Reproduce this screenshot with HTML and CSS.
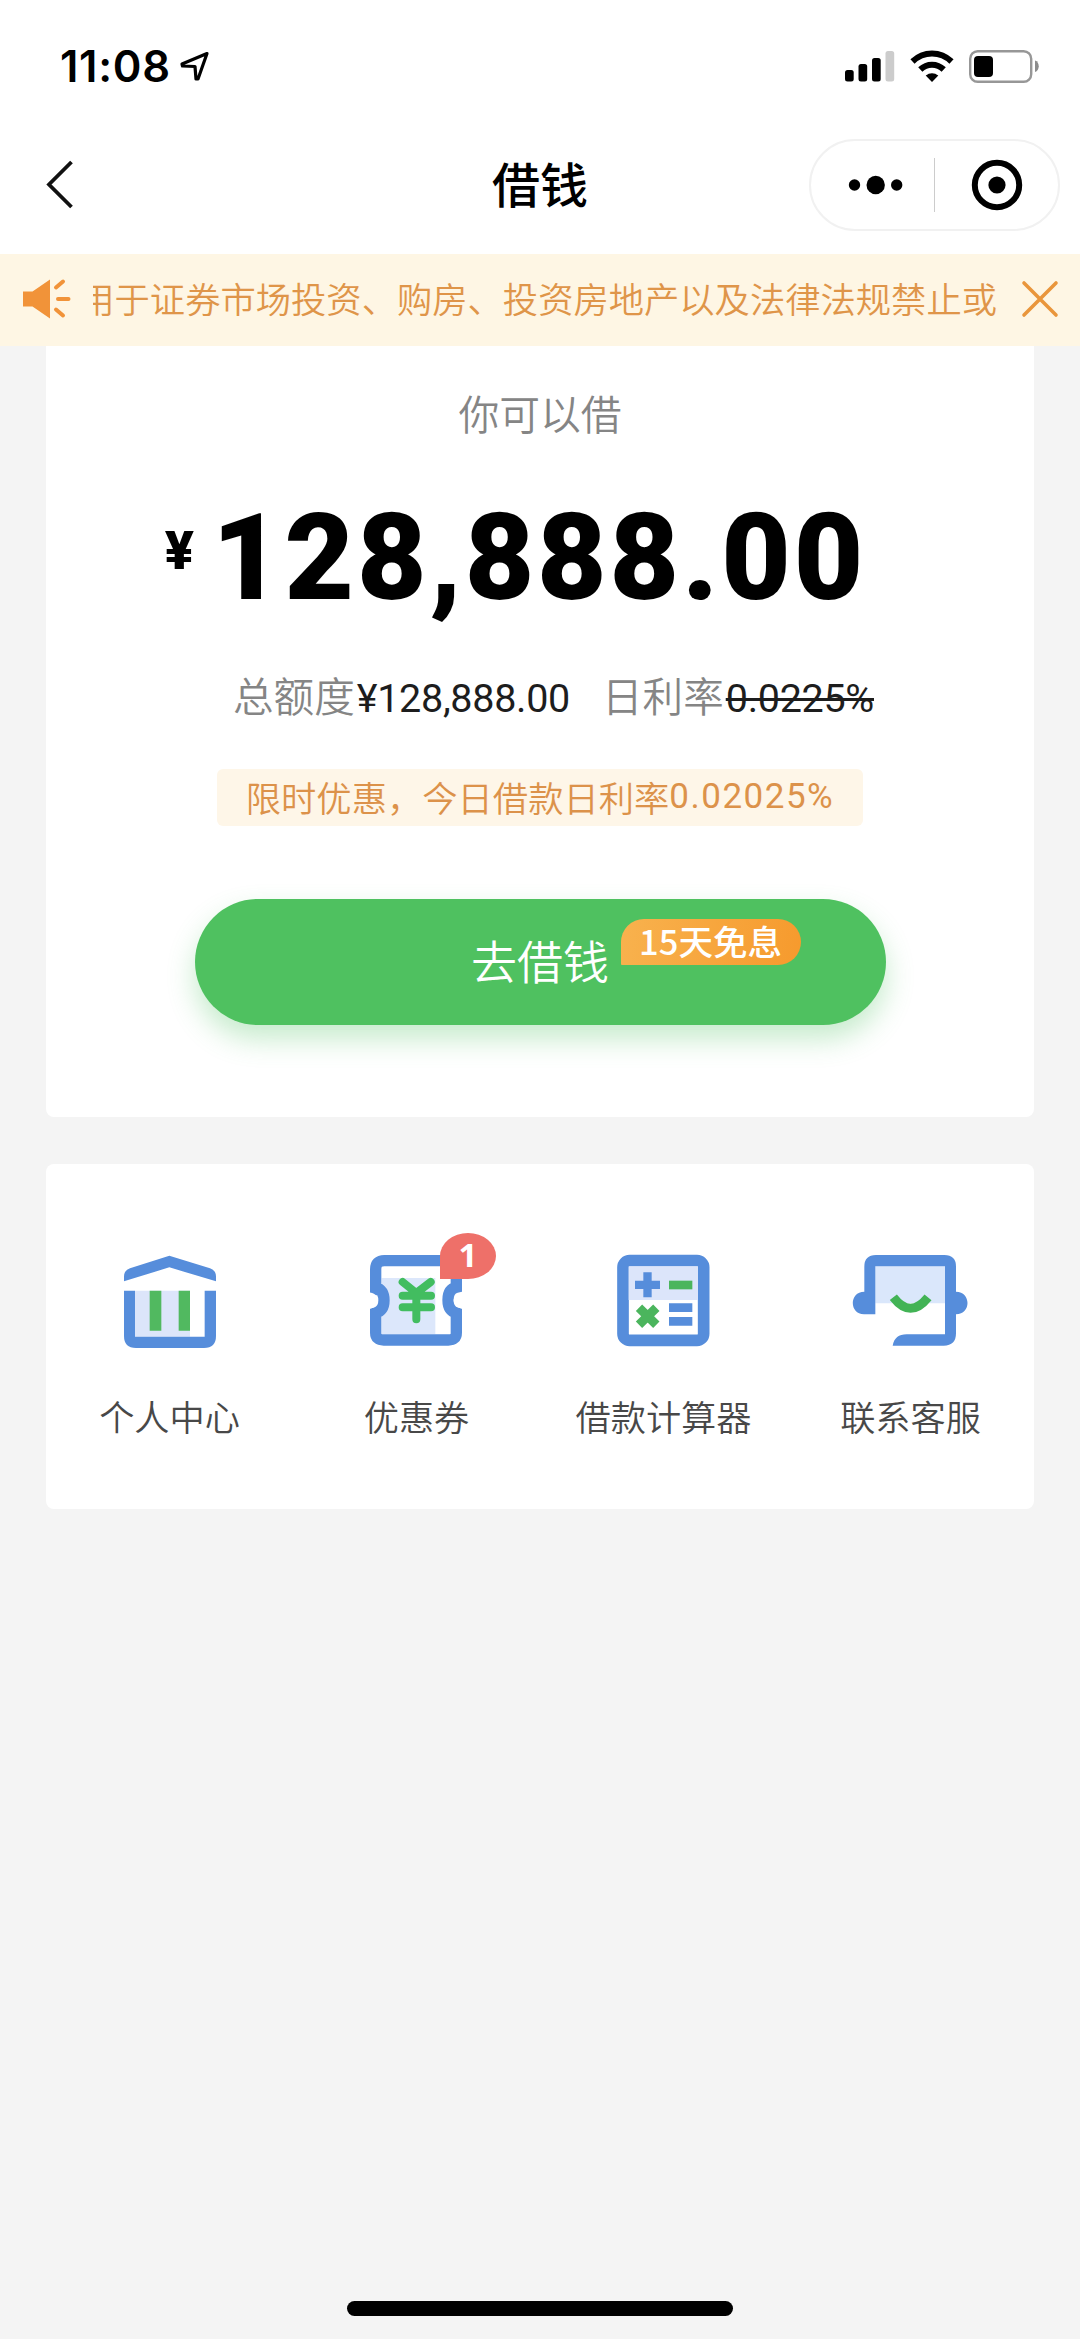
FILE: index.html
```html
<!DOCTYPE html>
<html lang="zh-CN">
<head>
<meta charset="utf-8">
<title>借钱</title>
<link rel="stylesheet" href="styles.css">
</head>
<body>
<div class="app">
  <header class="header">
    <div class="status">
      <div class="status-left">
        <span class="time">11:08</span>
        <svg class="location" width="30" height="32" viewBox="0 0 30 32"><path d="M27 3.500 2 14 2.500 16 15 16.500 16 29 18 29Z" fill="none" stroke="#000" stroke-width="3.200" stroke-linejoin="round"/></svg>
      </div>
      <div class="status-right">
        <svg width="50" height="32" viewBox="0 0 50 32"><rect x="0" y="20" width="8.700" height="11.500" rx="2.500"/><rect x="13.500" y="14" width="8.700" height="17.500" rx="2.500"/><rect x="27" y="8" width="8.700" height="23.500" rx="2.500"/><rect x="40.500" y="1" width="8.700" height="30.500" rx="2.500" fill="#ccc"/></svg>
        <svg width="44" height="32" viewBox="0 0 44 32"><g fill="none" stroke="#000" stroke-width="6"><path d="M2.500 11.500C13.500 .8 30.500 .8 41.500 11.500"/><path d="M10.300 19.500C17 13 27 13 33.700 19.500"/></g><path d="M22 32 15.700 25.600C19.300 22.300 24.700 22.300 28.300 25.600Z"/></svg>
        <svg width="70" height="33" viewBox="0 0 70 33"><rect x="1.200" y="1.200" width="61" height="30.600" rx="7.500" fill="none" stroke="#979797" stroke-width="2.400"/><rect x="5" y="6" width="19" height="21" rx="4"/><path d="M66 10.500C71 12 71 20.500 66 22Z" fill="#8c8c8c"/></svg>
      </div>
    </div>
    <nav class="nav">
      <svg class="back" width="30" height="50" viewBox="0 0 30 50"><path d="M27.500 2 5 24.500 27.500 47" fill="none" stroke="#111" stroke-width="3.800"/></svg>
      <h1 class="title">借钱</h1>
      <div class="capsule">
        <svg width="56" height="20" viewBox="0 0 56 20"><circle cx="6.500" cy="10" r="5.700"/><circle cx="27.700" cy="10" r="9.200"/><circle cx="48.700" cy="10" r="5.700"/></svg>
        <span class="divider"></span>
        <svg width="52" height="52" viewBox="0 0 52 52"><circle cx="26" cy="26" r="22.200" fill="none" stroke="#000" stroke-width="6"/><circle cx="26" cy="26" r="8.600"/></svg>
      </div>
    </nav>
  </header>

  <div class="notice">
    <svg class="horn" width="50" height="42" viewBox="0 0 50 42"><path d="M1 13.500H10.500L28 1.500V40.500L10.500 28.500H1Z" fill="#f19339"/><path d="M34 9.500 41 3.500M36 21H46.500M34 31.500 41 37.500" stroke="#f19339" stroke-width="4" stroke-linecap="round"/></svg>
    <div class="marquee"><span class="marquee-text">用于证券市场投资、购房、投资房地产以及法律法规禁止或</span></div>
    <svg class="close" width="38" height="38" viewBox="0 0 38 38"><path d="M3 3 35 35M35 3 3 35" stroke="#e9963c" stroke-width="3.600" stroke-linecap="round"/></svg>
  </div>

  <main class="content">
    <section class="loan">
      <p class="caption">你可以借</p>
      <p class="amount"><span class="yen">¥</span><span class="figure">128,888.00</span></p>
      <p class="terms">
        <span class="term"><span>总额度</span><span class="value total">¥128,888.00</span></span>
        <span class="term"><span>日利率</span><span class="value struck">0.0225%</span></span>
      </p>
      <p class="promo"><span>限时优惠，今日借款日利率</span><span class="promo-rate">0.02025%</span></p>
      <a class="borrow">去借钱<span class="free">15天免息</span></a>
    </section>

    <section class="menu">
      <a class="item">
        <svg width="120" height="96" viewBox="90 102 360 288"><path d="M132 184V170Q132 151 150 145L268 107 390 145Q408 151 408 170V184L268 142Z" fill="#568ddb"/><path d="M165 212H330V350H165Z" fill="#dce5fa"/><path d="M209 212H244V332H209ZM296 212H330V332H296Z" fill="#51b960"/><path d="M132 212H165V350H374V212H408V348Q408 384 372 384H168Q132 384 132 348Z" fill="#568ddb"/></svg>
        <span class="label">个人中心</span>
      </a>
      <a class="item">
        <svg width="120" height="96" viewBox="53 132 360 288"><path d="M127 204H288V372H127Z" fill="#dce7fb"/><path d="M109 256V178Q109 152 135 152H325Q351 152 351 178V232Q326 238 326 270 326 302 351 309V368Q351 390 327 390H133Q109 390 109 368V309Q134 302 134 271 134 240 109 232" fill="none" stroke="#568ddb" stroke-width="34"/><path d="M80 247C128 243 128 300 80 296ZM382 247C330 243 330 300 382 296Z" fill="#fff"/><path d="M190 216 231 249 274 216M231 249V328M190 257H275M190 292H275" fill="none" stroke="#42bd60" stroke-width="24" stroke-linecap="round" stroke-linejoin="round"/></svg>
        <span class="label">优惠券</span>
        <span class="count">1</span>
      </a>
      <a class="item">
        <svg width="120" height="96" viewBox="132 102 360 288"><rect x="189" y="122" width="242" height="239" rx="20" fill="#fff" stroke="#568ddb" stroke-width="35"/><path d="M206 139H414V240H206Z" fill="#dce5fa"/><path d="M250 157H275V182H300V207H275V232H250V207H225V182H250ZM327 250H397V276H327ZM327 291H397V317H327Z" fill="#568ddb"/><path d="M327 182H397V208H327Z" fill="#4bb55d"/><path d="M237 263 289 314M289 263 237 314" stroke="#4bb55d" stroke-width="27"/></svg>
        <span class="label">借款计算器</span>
      </a>
      <a class="item">
        <svg width="120" height="96" viewBox="123 102 360 288"><path d="M196 139H405V250H196Z" fill="#dae7fb"/><path d="M163 215V140Q163 105 198 105H403Q438 105 438 140V215C484 215 484 283 438 283V340Q438 377 401 377H248Q254 343 290 343H405V139H196V283H162C117 283 117 215 163 215Z" fill="#568ddb"/><path d="M250 232Q301 298 354 232" fill="none" stroke="#42b355" stroke-width="27"/></svg>
        <span class="label">联系客服</span>
      </a>
    </section>
  </main>
  <div class="home"></div>
</div>
</body>
</html>
```
FILE: styles.css
```css
* { box-sizing: border-box; }

body {
  margin: 0;
  background: #f4f4f4;
  font-family: "Noto Sans CJK SC", sans-serif;
  font-weight: 350;
}

h1, p { margin: 0; }

svg { display: block; flex: none; }

.app {
  display: flex;
  flex-direction: column;
  width: 1080px;
  height: 2339px;
  overflow: hidden;
}

.header { height: 254px; background: #fff; }

.status {
  display: flex;
  justify-content: space-between;
  align-items: center;
  height: 132px;
  padding: 0 41px 0 60px;
}

.status-left { display: flex; align-items: center; gap: 9px; }

.time {
  font: 600 43.5px/52px Inter, sans-serif;
  letter-spacing: 0.7px;
}

.status-right { display: flex; align-items: center; gap: 15px; }

.nav {
  display: grid;
  grid-template-columns: 250px 1fr 250px;
  align-items: center;
  height: 105px;
  padding: 0 21px;
}

.back { margin-left: 23px; }

.title {
  padding-bottom: 5px;
  text-align: center;
  font-size: 48px;
  font-weight: 500;
  line-height: 87px;
}

.capsule {
  display: grid;
  grid-template-columns: 123px 1px 1fr;
  align-items: center;
  justify-items: center;
  width: 251px;
  height: 92px;
  border: 2px solid #f1f1f1;
  border-radius: 46px;
}

.capsule svg:first-child { margin-left: 7px; }

.divider { width: 1px; height: 54px; background: #ccc; }

.notice {
  display: flex;
  align-items: center;
  height: 92px;
  padding: 0 21px 2px 22px;
  background: #fef6e4;
}

.marquee {
  display: flex;
  justify-content: flex-end;
  width: 904px;
  margin-left: 21px;
  margin-right: 24px;
  overflow: hidden;
}

.marquee-text {
  flex: none;
  padding-bottom: 2px;
  color: #df9549;
  font-size: 35.3px;
  line-height: 60px;
  white-space: nowrap;
}

.content {
  display: flex;
  flex: 1;
  flex-direction: column;
  gap: 47px;
  padding: 0 46px;
}

.loan {
  display: flex;
  flex-direction: column;
  align-items: center;
  height: 771px;
  padding-top: 37px;
  background: #fff;
  border-radius: 0 0 8px 8px;
}

.caption {
  color: #858585;
  font-size: 40.8px;
  line-height: 60px;
}

.amount {
  display: flex;
  align-items: flex-start;
  height: 140px;
  margin-top: 45px;
  margin-right: 49px;
  color: #000;
  font-family: Roboto, sans-serif;
  line-height: 140px;
}

.yen {
  margin-right: 18px;
  font-size: 54px;
  font-weight: 900;
  line-height: 125px;
}

.figure {
  font-size: 120px;
  font-weight: 900;
  letter-spacing: 2.9px;
}

.terms {
  display: flex;
  gap: 32px;
  height: 60px;
  margin-top: 37px;
  margin-left: 27px;
  color: #858585;
  font-size: 40.6px;
  line-height: 60px;
}

.term { display: flex; gap: 2px; }

.value {
  padding-top: 4px;
  color: #1d1d1d;
  font-family: Roboto, sans-serif;
  font-size: 39.5px;
  font-weight: 400;
  letter-spacing: -0.3px;
}

.struck { text-decoration: line-through; }

.promo {
  display: flex;
  justify-content: center;
  width: 646px;
  height: 57px;
  margin-top: 44px;
  background: #fef6e8;
  border-radius: 6px;
  color: #dc924a;
  font-size: 35.3px;
  line-height: 56px;
}

.promo-rate {
  font-family: Roboto, sans-serif;
  font-size: 35px;
  font-weight: 400;
  letter-spacing: 1.5px;
}

.borrow {
  position: relative;
  width: 691px;
  height: 126px;
  margin-top: 73px;
  background: #4fc160;
  border-radius: 63px;
  box-shadow: 0 14px 28px rgba(79, 193, 96, 0.32);
  color: #fff;
  font-size: 46px;
  line-height: 120px;
  text-align: center;
}

.free {
  position: absolute;
  top: 20px;
  left: 426px;
  width: 180px;
  height: 46px;
  background: linear-gradient(100deg, #f8b24e, #f69a2d);
  border-radius: 23px 23px 23px 1px;
  font-size: 34.5px;
  font-weight: 500;
  line-height: 42px;
}

.menu {
  display: grid;
  grid-template-columns: repeat(4, 1fr);
  height: 345px;
  padding-top: 90px;
  background: #fff;
  border-radius: 8px;
}

.item {
  position: relative;
  display: flex;
  flex-direction: column;
  align-items: center;
}

.label {
  margin-top: 39px;
  color: #484848;
  font-size: 35.2px;
  line-height: 54px;
}

.count {
  position: absolute;
  top: -21px;
  left: 147px;
  width: 56px;
  height: 46px;
  background: #ee7069;
  border-radius: 28px 28px 28px 0 / 23px 23px 23px 0;
  color: #fff;
  font: 700 33px/44px "Noto Sans", sans-serif;
  text-align: center;
}

.home {
  align-self: center;
  width: 386px;
  height: 15px;
  margin-bottom: 23px;
  background: #000;
  border-radius: 8px;
}
```
